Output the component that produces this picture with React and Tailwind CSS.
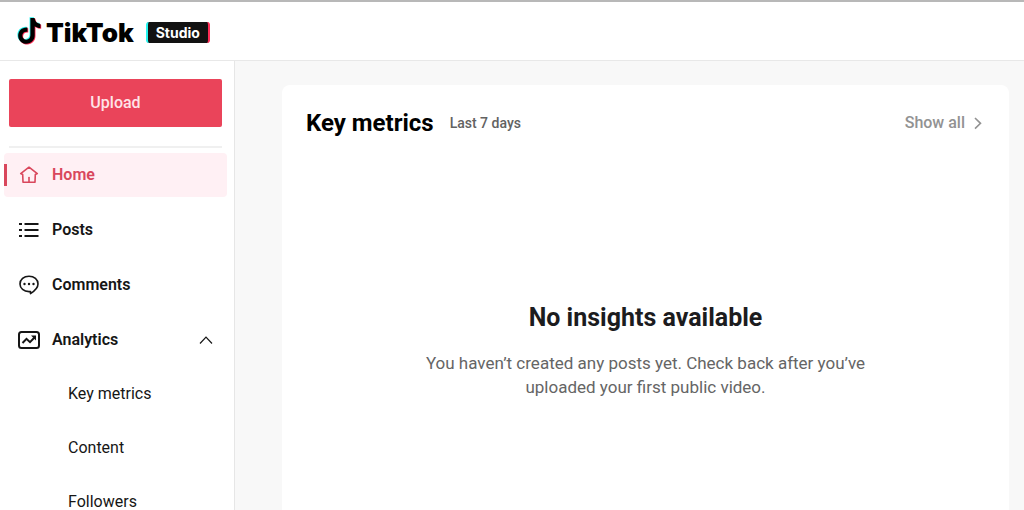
import clsx from "clsx";

const NOTE_PATH =
  "M12.4 0h4.300c.3 3.500 2.500 5.700 5.900 6v4.200c-2.200 0-4.200-.7-5.800-1.900v9.300c0 5-3.700 8.600-8.300 8.600C3.700 26.200 0 22.600 0 18c0-5 4.100-8.800 9.400-8.300v4.400c-3-.5-5.200 1.300-5.200 3.900 0 2.300 1.800 4.100 4.100 4.100 2.400 0 4.100-1.700 4.100-4.500z";

const HomeIcon = () => (
  <svg width="20" height="20" viewBox="0 0 20 20" fill="none" stroke="currentColor" strokeWidth="1.600" strokeLinejoin="round" strokeLinecap="round">
    <path d="M10 2.200 1.700 8.600l2 .9.300 7.700h12l.3-7.700 2-.9z" />
    <path d="M10 12.500v4.500" />
  </svg>
);

const PostsIcon = () => (
  <svg width="20" height="20" viewBox="0 0 20 20" fill="currentColor">
    <path d="M0 3h3v2H0zM5.500 3H19.500v2H5.500zM0 9h3v2H0zM5.500 9H19.500v2H5.500zM0 15h3v2H0zM5.500 15H19.500v2H5.500z" />
  </svg>
);

const CommentsIcon = () => (
  <svg width="20" height="20" viewBox="0 0 20 20" fill="none" stroke="currentColor" strokeWidth="1.600" strokeLinejoin="round">
    <path d="M10 1.200c5.200 0 9 3.300 9 7.800 0 3.300-2.500 6.400-7.500 9.600v-2.100c-.5.100-1 .1-1.500.1-5.200 0-9-3.200-9-7.600s3.800-7.800 9-7.800z" />
    <g fill="currentColor" stroke="none">
      <circle cx="5.500" cy="9" r="1.200" />
      <circle cx="10" cy="9" r="1.200" />
      <circle cx="14.500" cy="9" r="1.200" />
    </g>
  </svg>
);

const AnalyticsIcon = () => (
  <svg width="22" height="18" viewBox="0 0 22 18" fill="none" stroke="currentColor" strokeWidth="2">
    <rect x="1" y="1" width="20" height="16" rx="2.500" />
    <path d="M4.500 12 8.500 7.800l3.500 3.400 4.500-4.700" />
    <path d="M13 4.500h5v5z" fill="currentColor" stroke="none" />
  </svg>
);

const navItems = [
  { label: "Home", icon: HomeIcon, active: true },
  { label: "Posts", icon: PostsIcon },
  { label: "Comments", icon: CommentsIcon },
  { label: "Analytics", icon: AnalyticsIcon, expanded: true },
];

const analyticsItems = ["Key metrics", "Content", "Followers"];

const Logo = () => (
  <a href="#" className="flex items-center pt-[3px] font-['Inter',sans-serif]">
    <svg width="26" height="28" viewBox="-1.500 -1 25 28.500" aria-hidden="true" className="mb-1">
      <path d={NOTE_PATH} fill="#25f4ee" transform="translate(-.8 -.8)" />
      <path d={NOTE_PATH} fill="#fe2c55" transform="translate(.8 .8)" />
      <path d={NOTE_PATH} fill="#000" />
    </svg>
    <span className="ml-1 text-[26px] leading-8 font-black text-black">TikTok</span>
    <span className="ml-3 rounded-[3px] border-x-2 border-l-[#25f4ee] border-r-[#fe2c55] bg-[#121212] px-2 text-sm leading-[21px] font-bold text-white">
      Studio
    </span>
  </a>
);

const Sidebar = () => (
  <aside className="w-[235px] shrink-0 border-r border-[#e6e6e6] bg-white pt-[18px]">
    <div className="ml-[9px] mr-3 border-b-2 border-[#f0f0f0] pb-[19px]">
      <button className="h-12 w-full rounded-xs bg-[#ea445a] font-medium text-[#ffe3e7]">Upload</button>
    </div>
    <nav className="mt-[5px] flex flex-col gap-[10px] pl-1 pr-[7px]">
      <ul className="flex flex-col gap-[11px]">
        {navItems.map(({ label, icon: Icon, active, expanded }) => (
          <li key={label}>
            <a
              href="#"
              className={clsx(
                "relative flex h-11 items-center rounded-sm pr-3 font-semibold",
                active ? "bg-[#fff0f4] text-[#d9475c]" : "text-[#161616]"
              )}
            >
              {active && <span className="absolute left-0 h-[22px] w-[3px] bg-[#d9475c]" />}
              <span className="ml-3 mr-2 flex w-7 justify-center pr-[2px]">
                <Icon />
              </span>
              {label}
              {expanded && (
                <svg width="18" height="18" viewBox="0 0 18 18" fill="none" stroke="currentColor" strokeWidth="1.200" className="ml-auto">
                  <path d="M3 12.500 9 6.200l6 6.300" />
                </svg>
              )}
            </a>
          </li>
        ))}
      </ul>
      <ul className="flex flex-col gap-[10px]">
        {analyticsItems.map((item) => (
          <li key={item}>
            <a href="#" className="flex h-11 items-center pl-16 text-[#161616]">
              {item}
            </a>
          </li>
        ))}
      </ul>
    </nav>
  </aside>
);

const KeyMetrics = () => (
  <section className="h-full rounded-t-lg bg-white px-6 pt-5">
    <div className="flex h-9 items-center">
      <h2 className="text-2xl font-bold text-black">Key metrics</h2>
      <span className="ml-4 text-sm font-medium text-[#626262]">Last 7 days</span>
      <a href="#" className="ml-auto flex items-center gap-1 font-medium text-[#929292]">
        Show all
        <svg width="16" height="16" viewBox="0 0 16 16" fill="none" stroke="currentColor" strokeWidth="1.600">
          <path d="m6 3 5.500 5.300L6 13.600" />
        </svg>
      </a>
    </div>
    <div className="mx-auto mt-40 max-w-[450px] text-center">
      <h3 className="text-[25px] leading-[34px] font-bold text-[#1c1c1e]">No insights available</h3>
      <p className="mt-4 text-[17px] leading-6 text-[#656565]">
        You haven’t created any posts yet. Check back after you’ve uploaded your first public video.
      </p>
    </div>
  </section>
);

const App = () => {
  return (
    <div className="flex h-screen flex-col overflow-hidden border-t-2 border-[#b8b8b8] bg-[#f8f8f8] font-['Roboto',sans-serif]">
      <header className="flex h-[59px] shrink-0 items-center border-b border-[#e8e8e8] bg-white px-4">
        <Logo />
      </header>
      <div className="flex min-h-0 flex-1">
        <Sidebar />
        <main className="min-w-0 flex-1 pl-[47px] pr-[15px] pt-6">
          <KeyMetrics />
        </main>
      </div>
    </div>
  );
};

export default App;
